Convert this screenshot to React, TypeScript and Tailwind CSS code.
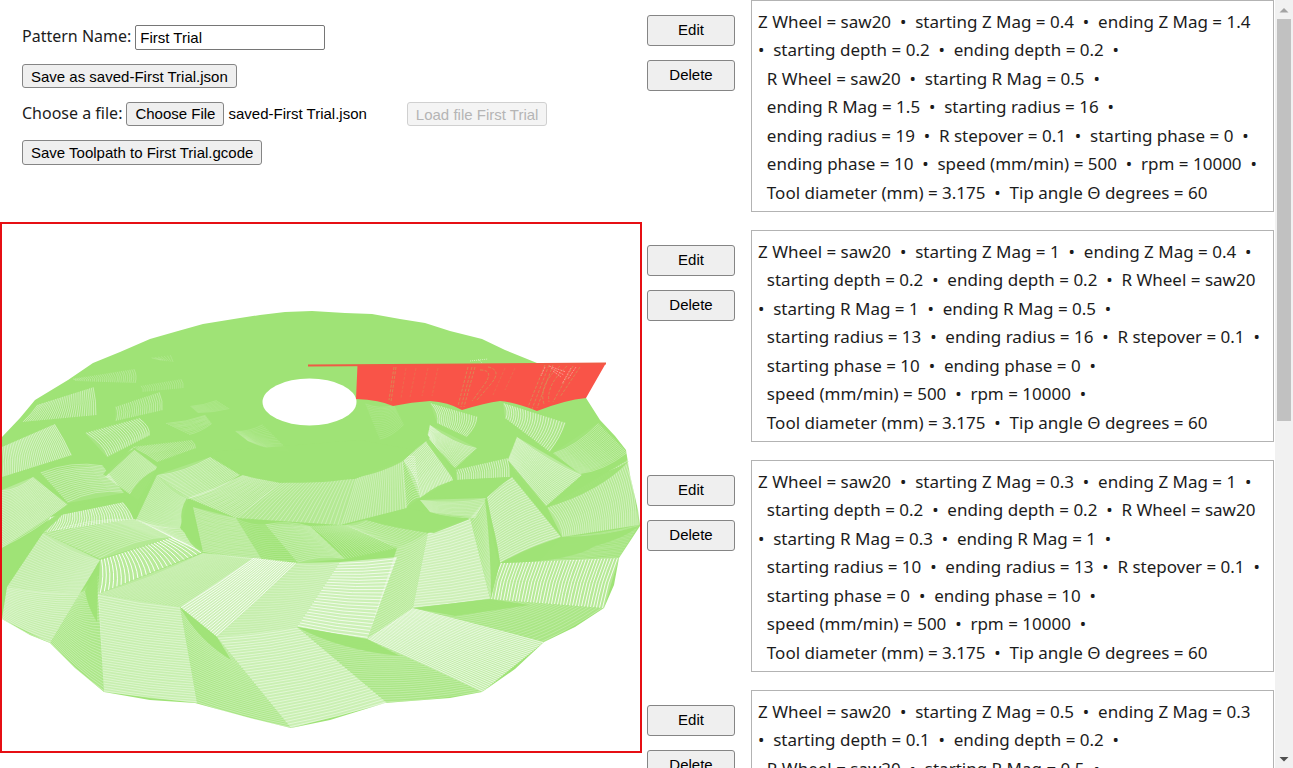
import { useState } from "react";

type Point = [number, number];

interface Facet {
  corners: [Point, Point, Point, Point];
  lines: number;
  tint: number;
  ink: number;
  bend?: number;
  along?: boolean;
}

const facet = (
  coords: number[],
  lines: number,
  tint: number,
  ink: number,
  bend = 0,
  along = false,
): Facet => ({
  corners: [
    [coords[0], coords[1]],
    [coords[2], coords[3]],
    [coords[4], coords[5]],
    [coords[6], coords[7]],
  ],
  lines,
  tint,
  ink,
  bend,
  along,
});

// Corners run clockwise. Cut lines join the left and right edges, or the top and bottom edges when `along` is set.
const facets: Facet[] = [
  facet([37, 405, 94, 387, 97, 415, 22, 422], 32, 0.06, 0.42, 2, true),
  facet([72, 379, 135, 369, 136, 383, 75, 381], 30, 0.02, 0.24, 3, true),
  facet([150, 358, 172, 355, 174, 362, 160, 360], 7, 0, 0.15, 0, true),
  facet([115, 407, 160, 392, 163, 410, 115, 421], 22, 0.04, 0.32, 3, true),
  facet([140, 386, 182, 379, 184, 388, 142, 392], 20, 0, 0.2, 2, true),
  facet([165, 423, 205, 415, 212, 424, 190, 435], 12, 0, 0.18, 3),
  facet([235, 431, 262, 424, 290, 452, 248, 441], 18, 0, 0.13, 4),
  facet([190, 406, 216, 400, 230, 409, 198, 413], 9, 0, 0.13, 2),
  facet([2, 447, 55, 424, 72, 455, 2, 477], 36, 0.16, 0.48, 2, true),
  facet([85, 433, 140, 418, 150, 435, 107, 457], 22, 0.1, 0.5, 7, true),
  facet([103, 475, 132, 448, 157, 467, 138, 500], 22, 0.25, 0.24, 6),
  facet([132, 447, 192, 440, 196, 448, 157, 462], 26, 0.03, 0.3, 3, true),
  facet([40, 472, 102, 465, 124, 493, 68, 503], 18, 0.1, 0.35, -9),
  facet([2, 490, 33, 477, 68, 505, 2, 548], 34, 0.26, 0.36, 6),
  facet([50, 517, 123, 502, 134, 519, 40, 533], 34, 0.22, 0.65, 3, true),
  facet([157, 475, 210, 457, 240, 475, 188, 499], 22, 0.14, 0.4, 6),
  facet([157, 475, 188, 499, 180, 528, 136, 520], 26, 0.28, 0.22, 7),
  facet([43, 533, 134, 519, 173, 537, 100, 559], 19, 0.22, 0.3, -10),
  facet([134, 519, 180, 528, 203, 552, 173, 537], 12, 0.3, 0.3, 4),
  facet([188, 498, 243, 475, 280, 483, 236, 518], 24, 0.2, 0.32, 3),
  facet([236, 518, 280, 483, 355, 479, 340, 525], 25, 0.22, 0.3, -3),
  facet([340, 525, 355, 479, 403, 460, 407, 508], 26, 0.22, 0.3, 3),
  facet([403, 460, 430, 438, 453, 480, 420, 498], 24, 0.22, 0.5, 7, true),
  facet([402, 460, 415, 456, 420, 498, 406, 508], 19, 0.04, 0.36, -5),
  facet([193, 507, 236, 518, 262, 560, 203, 552], 26, 0.2, 0.22, 3),
  facet([236, 518, 265, 524, 298, 563, 262, 560], 20, 0, 0.16, 4),
  facet([265, 524, 310, 526, 345, 559, 298, 563], 24, 0.14, 0.28, -6),
  facet([310, 526, 345, 525, 397, 548, 345, 559], 20, 0, 0.26, 5, true),
  facet([345, 525, 366, 520, 428, 533, 397, 548], 18, 0.18, 0.25, 5),
  facet([430, 403, 478, 417, 467, 437, 437, 423], 19, 0.08, 0.5, 5, true),
  facet([430, 425, 477, 448, 455, 468, 428, 435], 19, 0.13, 0.42, 7),
  facet([503, 403, 566, 423, 550, 452, 505, 418], 24, 0.13, 0.55, 4, true),
  facet([517, 437, 582, 475, 545, 507, 508, 460], 26, 0.28, 0.4, 6),
  facet([455, 470, 508, 458, 510, 477, 457, 480], 24, 0.1, 0.5, 2, true),
  facet([553, 453, 598, 423, 628, 453, 580, 474], 26, 0.04, 0.3, 8),
  facet([547, 508, 628, 460, 639, 525, 562, 537], 38, 0.22, 0.38, 7, true),
  facet([487, 497, 512, 477, 561, 537, 500, 563], 30, 0.34, 0.42, -4),
  facet([420, 500, 486, 498, 475, 518, 430, 512], 12, 0.22, 0.26, 5),
  facet([365, 403, 394, 405, 404, 425, 380, 440], 19, 0, 0.12, 5),
  facet([43, 533, 100, 560, 80, 593, 7, 587], 25, 0.38, 0.26, 7),
  facet([7, 587, 80, 593, 50, 643, 2, 619], 22, 0.4, 0.34, 5),
  facet([80, 593, 98, 575, 104, 692, 50, 643], 38, 0.14, 0.28, 6),
  facet([100, 560, 173, 537, 203, 552, 98, 594], 25, 0.26, 0.95, 4, true),
  facet([98, 594, 203, 553, 253, 558, 180, 607], 28, 0.3, 0.22, 5),
  facet([98, 594, 180, 607, 197, 703, 104, 692], 38, 0.42, 0.38, 3),
  facet([180, 607, 217, 637, 291, 728, 197, 703], 40, 0.14, 0.3, 4),
  facet([180, 607, 253, 558, 297, 563, 217, 637], 19, 0.48, 0.8, 2),
  facet([297, 563, 340, 562, 297, 627, 217, 637], 28, 0.4, 0.24, 4),
  facet([340, 562, 397, 557, 367, 639, 297, 627], 24, 0.47, 0.72, 2),
  facet([397, 548, 428, 533, 413, 608, 367, 639], 32, 0.26, 0.28, 5),
  facet([428, 533, 470, 518, 490, 599, 413, 608], 28, 0.48, 0.42, 2),
  facet([470, 518, 485, 500, 498, 563, 490, 599], 30, 0.18, 0.3, 3),
  facet([217, 637, 297, 627, 387, 703, 291, 728], 35, 0.45, 0.45, 3),
  facet([297, 627, 367, 639, 482, 692, 387, 703], 32, 0.12, 0.26, 4),
  facet([367, 639, 413, 608, 544, 642, 482, 692], 34, 0.36, 0.62, 4, true),
  facet([413, 608, 490, 599, 604, 608, 544, 642], 26, 0.12, 0.22, 4),
  facet([500, 563, 619, 558, 604, 608, 490, 599], 38, 0.24, 0.85, -3, true),
  facet([562, 537, 639, 525, 619, 558, 540, 561], 20, 0.02, 0.2, 3),
];

const shadows = [
  "M2 552C25 537 50 520 70 505Q62 517 43 533 22 556 2 587Z",
  "M68 504Q78 508 90 500 108 503 126 497L124 502 50 517Z",
  "M103 475Q115 456 138 447L132 452 106 476Z",
  "M127 500Q137 478 157 469 147 486 139 503L134 519Z",
  "M98 563L85 591Q88 608 97 622Z",
  "M183 528Q178 512 187 498 194 510 202 552Q188 545 183 528Z",
  "M366 520L408 508Q440 516 470 519L434 533Q400 530 366 520Z",
  "M485 500Q496 530 500 563L491 599Q491 548 485 500Z",
  "M500 563Q530 546 562 537 604 537 639 526 625 538 595 546 570 562 500 563Z",
  "M413 608L490 599 530 605Q495 610 455 616Z",
  "M180 607L217 637 231 660Q198 640 180 607Z",
  "M297 627L367 639 400 656Q340 650 297 627Z",
  "M545 508L582 475Q606 476 629 461 600 492 545 508Z",
  "M508 460L547 507 562 537 542 512Z",
  "M420 498Q440 482 457 480L510 477 487 497Z",
  "M454 480L427 443 421 430 457 471Z",
  "M210 452L240 474C280 488 360 486 403 461L415 450 360 440Z",
];

const silhouette =
  "2,437 20,418 35,400 68,380 93,363 120,352 150,339 178,331 203,324 240,318 260,315 285,312 312,311 345,313 372,314 400,319 425,323 450,331 482,339 505,350 537,363 586,398 600,420 615,436 626,450 630,475 638,510 640,526 619,558 614,585 604,608 575,627 544,642 515,669 482,692 450,698 385,703 330,720 291,728 250,718 195,703 150,700 104,692 75,668 50,643 30,635 2,619";

const mix = (a: Point, b: Point, t: number): Point => [
  a[0] + (b[0] - a[0]) * t,
  a[1] + (b[1] - a[1]) * t,
];

function cutLines({ corners, lines, bend = 0, along }: Facet): string {
  const [a, b, c, d] = corners;
  let path = "";
  for (let i = 0; i < lines; i++) {
    const t = (i + 0.5) / lines;
    const from = along ? mix(a, b, t) : mix(a, d, t);
    const to = along ? mix(d, c, t) : mix(b, c, t);
    const mid = mix(from, to, 0.5);
    const cx = mid[0] + (along ? bend : 0);
    const cy = mid[1] + (along ? 0 : bend);
    path += `M${from[0].toFixed(1)} ${from[1].toFixed(1)}Q${cx.toFixed(1)} ${cy.toFixed(1)} ${to[0].toFixed(1)} ${to[1].toFixed(1)}`;
  }
  return path;
}

function ToolpathPreview() {
  return (
    <div className="border-2 border-[#e60f14] bg-white">
      <svg viewBox="2 224 638 527" className="block w-full" role="img" aria-label="Toolpath preview">
        <polygon points={silhouette} fill="#9fe376" />
        {facets.map((f, i) => (
          <g key={i}>
            <polygon points={f.corners.map((p) => p.join(",")).join(" ")} fill="#fff" fillOpacity={f.tint} />
            <path d={cutLines(f)} fill="none" stroke="#fff" strokeOpacity={f.ink} strokeWidth="1" />
          </g>
        ))}
        {shadows.map((d) => (
          <path key={d} d={d} fill="#9fe376" fillOpacity="0.95" />
        ))}
        <ellipse cx="309.500" cy="402" rx="47" ry="23.500" fill="#fff" />
        <path
          d="M357.500 365L606 363 586 398Q565 400 537 411 515 402 500 401 485 403 462 410 448 402 430 401 412 402 393 406 380 400 356 399Z"
          fill="#f95448"
        />
        <path d="M308 365.500L606 363.500" stroke="#ef5b45" strokeWidth="2" />
        <g stroke="#cf9a58" strokeWidth="1" strokeOpacity="0.7" strokeDasharray="3 1.500" fill="none">
          <path d="M394 367L389 400M396 367L391 402M468 367L458 406M472 367L461 407M475 367L464 407M545 365L528 407M549 365L532 409M553 365L537 408" />
          <path d="M480 370Q495 370 484 385T472 401M488 367Q503 370 490 385T477 400M560 366Q538 385 544 404M567 366Q546 385 549 402M573 366L553 402M580 367L560 397" />
          <path strokeOpacity="0.3" d="M406 368L401 398M416 368L410 397M428 368L422 396M438 368L432 396M505 368L493 395M515 368L505 390" />
        </g>
        <g stroke="#ff9b94" strokeWidth="1" strokeOpacity="0.9" strokeDasharray="2 1">
          <path d="M549 366L566 372M551 368L564 375M553 371L561 377M571 368L562 384M576 367L568 379M545 367L541 376" />
        </g>
        <path d="M470 361L488 359M478 359L482 363" stroke="#d3f2be" strokeWidth="1" strokeDasharray="1 1" />
      </svg>
    </div>
  );
}

const passes: string[][] = [
  [
    "Z Wheel = saw20  •  starting Z Mag = 0.4  •  ending Z Mag = 1.4",
    "•  starting depth = 0.2  •  ending depth = 0.2  •",
    "  R Wheel = saw20  •  starting R Mag = 0.5  •",
    "  ending R Mag = 1.5  •  starting radius = 16  •",
    "  ending radius = 19  •  R stepover = 0.1  •  starting phase = 0  •",
    "  ending phase = 10  •  speed (mm/min) = 500  •  rpm = 10000  •",
    "  Tool diameter (mm) = 3.175  •  Tip angle Θ degrees = 60",
  ],
  [
    "Z Wheel = saw20  •  starting Z Mag = 1  •  ending Z Mag = 0.4  •",
    "  starting depth = 0.2  •  ending depth = 0.2  •  R Wheel = saw20",
    "•  starting R Mag = 1  •  ending R Mag = 0.5  •",
    "  starting radius = 13  •  ending radius = 16  •  R stepover = 0.1  •",
    "  starting phase = 10  •  ending phase = 0  •",
    "  speed (mm/min) = 500  •  rpm = 10000  •",
    "  Tool diameter (mm) = 3.175  •  Tip angle Θ degrees = 60",
  ],
  [
    "Z Wheel = saw20  •  starting Z Mag = 0.3  •  ending Z Mag = 1  •",
    "  starting depth = 0.2  •  ending depth = 0.2  •  R Wheel = saw20",
    "•  starting R Mag = 0.3  •  ending R Mag = 1  •",
    "  starting radius = 10  •  ending radius = 13  •  R stepover = 0.1  •",
    "  starting phase = 0  •  ending phase = 10  •",
    "  speed (mm/min) = 500  •  rpm = 10000  •",
    "  Tool diameter (mm) = 3.175  •  Tip angle Θ degrees = 60",
  ],
  [
    "Z Wheel = saw20  •  starting Z Mag = 0.5  •  ending Z Mag = 0.3",
    "•  starting depth = 0.1  •  ending depth = 0.2  •",
    "  R Wheel = saw20  •  starting R Mag = 0.5  •",
  ],
];

const buttonBase =
  "rounded-[3px] border border-[#858585] bg-[#efefef] font-['Liberation_Sans',sans-serif] text-[15px] text-black";

function PassRow({ lines }: { lines: string[] }) {
  return (
    <li className="flex gap-4">
      <div className="flex w-[88px] shrink-0 flex-col gap-[14px] pt-[15px]">
        <button type="button" className={`${buttonBase} h-[31px]`}>
          Edit
        </button>
        <button type="button" className={`${buttonBase} h-[31px]`}>
          Delete
        </button>
      </div>
      <div className="grid min-h-[212px] min-w-0 flex-1 grid-rows-7 border border-[#b3b3b3] px-[6px] pt-[7px] pb-1 text-[17px] leading-7 text-[#1c1c1c]">
        {lines.map((line) => (
          <p key={line} className="whitespace-pre">
            {line}
          </p>
        ))}
      </div>
    </li>
  );
}

export default function App() {
  const [name, setName] = useState("First Trial");
  return (
    <div className="flex h-screen overflow-hidden bg-white font-['Noto_Sans',sans-serif] text-[#1c1c1c]">
      <main className="grid min-w-0 flex-1 grid-cols-[642fr_633fr]">
        <section>
          <form className="flex min-h-[222px] flex-col items-start gap-[14px] px-[22px] pt-[25px] text-[16px] leading-6">
            <div className="flex items-start gap-1">
              <label htmlFor="pattern-name" className="leading-[22px]">
                Pattern Name:
              </label>
              <input
                id="pattern-name"
                value={name}
                onChange={(e) => setName(e.target.value)}
                className="h-[25px] w-[190px] rounded-[2px] border border-[#767676] bg-white px-1 font-['Liberation_Sans',sans-serif] text-[15px] text-black"
              />
            </div>
            <button type="button" className={`${buttonBase} h-6 px-2`}>
              Save as saved-{name}.json
            </button>
            <div className="flex items-start gap-1">
              <label htmlFor="pattern-file" className="leading-[22px]">
                Choose a file:
              </label>
              <div className="flex items-center gap-1">
                <input id="pattern-file" type="file" className="sr-only" />
                <label htmlFor="pattern-file" className={`${buttonBase} flex h-6 items-center px-2`}>
                  Choose File
                </label>
                <span className="font-['Liberation_Sans',sans-serif] text-[15px] text-black">
                  saved-First Trial.json
                </span>
              </div>
              <button
                type="button"
                disabled
                className="ml-9 h-6 rounded-[3px] border border-[#d0d0d0] bg-[#f4f4f4] px-2 font-['Liberation_Sans',sans-serif] text-[15px] text-[#b5b5b5]"
              >
                Load file {name}
              </button>
            </div>
            <button type="button" className={`${buttonBase} h-[25px] px-2`}>
              Save Toolpath to {name}.gcode
            </button>
          </form>
          <ToolpathPreview />
        </section>
        <ul className="flex flex-col gap-[18px] pr-px pl-[5px]">
          {passes.map((lines) => (
            <PassRow key={lines.join()} lines={lines} />
          ))}
        </ul>
      </main>
      <div aria-hidden="true" className="flex w-[18px] shrink-0 flex-col items-center justify-between bg-[#f1f1f1]">
        <svg viewBox="0 0 18 19" className="h-[19px] w-[18px] shrink-0">
          <path d="M4.500 12.500L9 8l4.500 4.500Z" fill="#a3a3a3" />
        </svg>
        <div className="flex w-[14px] flex-1 flex-col">
          <div className="h-[55%] bg-[#c1c1c1]" />
        </div>
        <svg viewBox="0 0 18 19" className="h-[19px] w-[18px] shrink-0">
          <path d="M4.500 8L9 12.500 13.500 8Z" fill="#505050" />
        </svg>
      </div>
    </div>
  );
}
